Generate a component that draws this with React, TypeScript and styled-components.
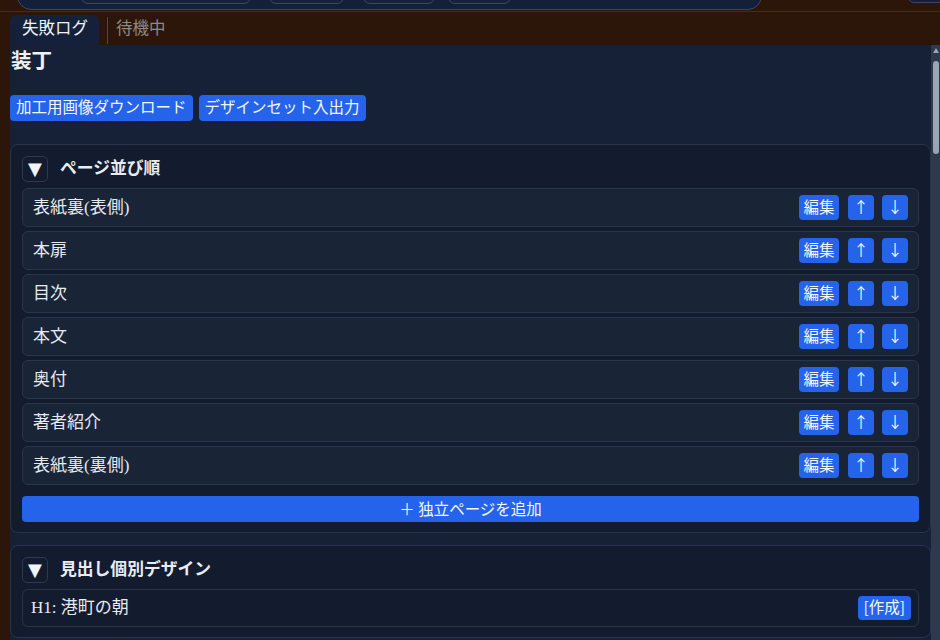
import styled, { createGlobalStyle } from 'styled-components'

const GlobalStyle = createGlobalStyle`
  html, body {
    margin: 0;
    padding: 0;
    background: #2b1609;
  }
  body {
    font-family: 'Liberation Serif', 'Noto Sans CJK JP', serif;
    color: #e6eaf1;
  }
  * {
    box-sizing: border-box;
  }
`

const pages = ['表紙裏(表側)', '本扉', '目次', '本文', '奥付', '著者紹介', '表紙裏(裏側)']
const headings = ['H1: 港町の朝']
const toolChips = [
  { width: 170, gap: 63 },
  { width: 75, gap: 18 },
  { width: 72, gap: 19 },
  { width: 63, gap: 13 },
]

export default function App() {
  return (
    <>
      <GlobalStyle />
      <Page>
        <TopStrip>
          <ToolPanel>
            {toolChips.map((c, i) => (
              <ToolChip key={i} $width={c.width} $gap={c.gap} />
            ))}
          </ToolPanel>
          <CornerBox />
        </TopStrip>

        <TabBar>
          <Tab $active>失敗ログ</Tab>
          <TabDivider />
          <Tab>待機中</Tab>
        </TabBar>

        <Panel>
          <ScrollArea>
            <PageTitle>装丁</PageTitle>
            <ActionRow>
              <Button>加工用画像ダウンロード</Button>
              <Button>デザインセット入出力</Button>
            </ActionRow>

            <Card>
              <CardHeader>
                <Toggle>▼</Toggle>
                <CardTitle>ページ並び順</CardTitle>
              </CardHeader>
              <RowList>
                {pages.map((p) => (
                  <Row key={p}>
                    <RowLabel>{p}</RowLabel>
                    <RowActions>
                      <Button $small>編集</Button>
                      <Button $small $square>↑</Button>
                      <Button $small $square>↓</Button>
                    </RowActions>
                  </Row>
                ))}
              </RowList>
              <AddButton>＋ 独立ページを追加</AddButton>
            </Card>

            <Card $gapTop>
              <CardHeader>
                <Toggle>▼</Toggle>
                <CardTitle>見出し個別デザイン</CardTitle>
              </CardHeader>
              <RowList>
                {headings.map((h) => (
                  <Row key={h} $short>
                    <RowLabel>{h}</RowLabel>
                    <Button $tiny>[作成]</Button>
                  </Row>
                ))}
              </RowList>
            </Card>
          </ScrollArea>

          <ScrollRail>
            <ScrollArrow />
            <ScrollThumb />
          </ScrollRail>
        </Panel>
      </Page>
    </>
  )
}

const Page = styled.div`
  height: 100vh;
  display: flex;
  flex-direction: column;
  overflow: hidden;
`

const TopStrip = styled.div`
  flex: none;
  height: 12px;
  display: flex;
  align-items: flex-end;
  overflow: hidden;
  border-bottom: 1px solid #4a2b1b;
`

const ToolPanel = styled.div`
  flex: none;
  width: 745px;
  height: 40px;
  margin: 0 0 1px 17px;
  display: flex;
  align-items: flex-end;
  padding-bottom: 5px;
  background: #14203a;
  border: 1px solid #3a4963;
  border-radius: 0 0 14px 14px;
`

const ToolChip = styled.div<{ $width: number; $gap: number }>`
  width: ${(p) => p.$width}px;
  height: 24px;
  margin-left: ${(p) => p.$gap}px;
  border: 1px solid #3a4963;
  border-radius: 0 0 7px 7px;
  background: #16223b;
`

const CornerBox = styled.div`
  flex: none;
  width: 40px;
  height: 30px;
  margin: 0 -8px 8px auto;
  background: #14203a;
  border: 1px solid #3a4963;
  border-radius: 0 0 6px 6px;
`

const TabBar = styled.div`
  flex: none;
  height: 33px;
  display: flex;
  align-items: flex-end;
  padding-left: 10px;
`

const Tab = styled.div<{ $active?: boolean }>`
  height: 30px;
  padding: 0 11px 7px 12px;
  display: flex;
  align-items: center;
  font-family: 'Noto Sans CJK JP', sans-serif;
  font-size: 16.5px;
  color: ${(p) => (p.$active ? '#eef1f6' : '#8c8a89')};
  background: ${(p) => (p.$active ? '#15213a' : 'transparent')};
  border-radius: 6px 6px 0 0;
  ${(p) => !p.$active && 'padding-left: 0;'}
`

const TabDivider = styled.div`
  width: 1px;
  height: 27px;
  margin: 0 8px 1px 8px;
  background: #4e4644;
`

const Panel = styled.div`
  flex: 1;
  min-height: 0;
  margin-left: 10px;
  display: flex;
  background: #162036;
`

const ScrollArea = styled.div`
  flex: 1;
  min-width: 0;
  overflow: hidden;
  padding-top: 1px;
`

const ScrollRail = styled.div`
  flex: none;
  width: 9px;
  display: flex;
  flex-direction: column;
  align-items: center;
  background: #2d394d;
`

const ScrollArrow = styled.div`
  width: 0;
  height: 0;
  margin-top: 3px;
  border-left: 3.5px solid transparent;
  border-right: 3.5px solid transparent;
  border-bottom: 5px solid #9aa4b4;
`

const ScrollThumb = styled.div`
  width: 6px;
  height: 93px;
  margin: 8px 0 0 1px;
  border-radius: 3px;
  background: #9aa4b4;
`

const PageTitle = styled.h2`
  margin: 0 0 0 1px;
  font-family: 'Noto Sans CJK JP', sans-serif;
  font-size: 20.5px;
  line-height: 26px;
  font-weight: 700;
  color: #eef1f6;
`

const ActionRow = styled.div`
  display: flex;
  gap: 6px;
  margin-top: 23px;
`

const Button = styled.button<{ $small?: boolean; $square?: boolean; $tiny?: boolean }>`
  flex: none;
  height: ${(p) => (p.$tiny ? 24 : p.$small ? 25 : 26)}px;
  min-width: ${(p) => (p.$square ? 26 : 0)}px;
  padding: 0 ${(p) => (p.$square ? 0 : p.$small ? 4.5 : 6)}px 2px;
  border: none;
  border-radius: 4px;
  background: #2563eb;
  color: #f3f6fb;
  font-family: 'Noto Sans CJK JP', sans-serif;
  font-size: 15.5px;
  line-height: 1;
  display: inline-flex;
  align-items: center;
  justify-content: center;
  cursor: pointer;
`

const Card = styled.section<{ $gapTop?: boolean }>`
  margin-top: ${(p) => (p.$gapTop ? 12 : 23)}px;
  padding: 11px 11px 10px;
  background: #131c2e;
  border: 1px solid #28344c;
  border-radius: 8px;
`

const CardHeader = styled.div`
  display: flex;
  align-items: center;
  gap: 12px;
  height: 26px;
`

const Toggle = styled.button`
  width: 26px;
  height: 26px;
  padding: 0;
  border: 1px solid #2c3951;
  border-radius: 5px;
  background: transparent;
  color: #f1f4f8;
  font-family: 'DejaVu Sans', sans-serif;
  font-size: 18px;
  line-height: 1;
  display: flex;
  align-items: center;
  justify-content: center;
`

const CardTitle = styled.h3`
  margin: 0 0 5px;
  font-family: 'Noto Sans CJK JP', sans-serif;
  font-size: 16.8px;
  font-weight: 700;
  color: #e9edf3;
`

const RowList = styled.div`
  display: flex;
  flex-direction: column;
  gap: 4px;
  margin-top: 6px;
`

const Row = styled.div<{ $short?: boolean }>`
  height: ${(p) => (p.$short ? 38 : 39)}px;
  padding: 0 ${(p) => (p.$short ? 7 : 10)}px 0 ${(p) => (p.$short ? 8 : 10)}px;
  display: flex;
  align-items: center;
  justify-content: space-between;
  background: ${(p) => (p.$short ? '#131c2e' : '#1a2437')};
  border: 1px solid #29354d;
  border-radius: 6px;
`

const RowLabel = styled.span`
  margin-bottom: 5px;
  font-size: 17px;
  color: #e6eaf1;
`

const RowActions = styled.div`
  display: flex;
  align-items: center;
  gap: 8px;

  & > :first-child {
    margin-right: 1px;
  }
`

const AddButton = styled.button`
  display: block;
  width: 100%;
  height: 26px;
  margin-top: 11px;
  padding: 0 0 2px;
  border: none;
  border-radius: 4px;
  background: #2563eb;
  color: #f3f6fb;
  font-family: 'Noto Sans CJK JP', sans-serif;
  font-size: 15.5px;
  line-height: 24px;
  cursor: pointer;
`
